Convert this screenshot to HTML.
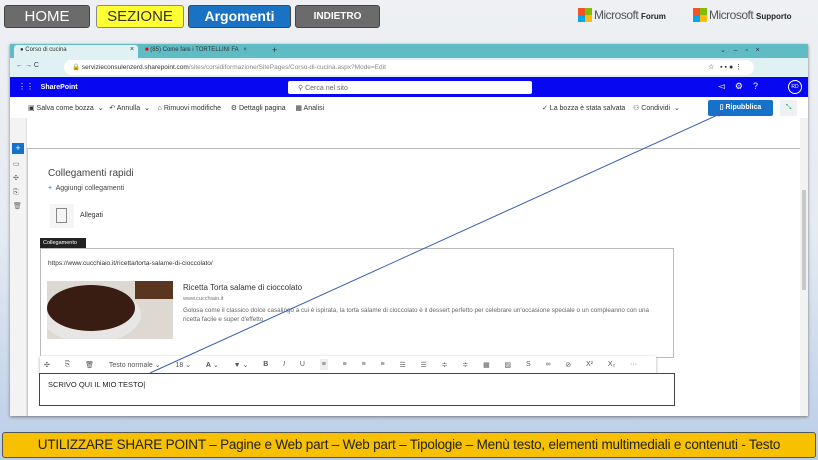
<!DOCTYPE html>
<html><head><meta charset="utf-8"><style>
*{margin:0;padding:0;box-sizing:border-box}
body{width:818px;height:460px;overflow:hidden;position:relative;font-family:"Liberation Sans",sans-serif;background:linear-gradient(#eef0f3 0%,#e6ebf2 50%,#b9cde8 100%)}
.a{position:absolute}
.btn{position:absolute;top:5px;height:23px;border-radius:3px;border:1px solid #444;text-align:center;line-height:21px}
.t{font-size:7px;color:#333;white-space:nowrap}
.tb{display:flex;justify-content:space-between;align-items:center}
</style></head><body>
<div class="btn" style="left:4px;width:86px;background:#6b6b6b;color:#fff;font-size:15px">HOME</div>
<div class="btn" style="left:96px;width:88px;background:#ffff33;color:#333;font-size:15px;border-color:#888">SEZIONE</div>
<div class="btn" style="left:188px;width:103px;background:#1a72c4;color:#fff;font-size:14px;font-weight:bold">Argomenti</div>
<div class="btn" style="left:295px;width:85px;background:#6b6b6b;color:#fff;font-size:10px;font-weight:bold">INDIETRO</div>
<div class="a" style="left:578px;top:8px;width:14px;height:14px;background:linear-gradient(90deg,#f35325 50%,#81bc06 50%) top/100% 50% no-repeat,linear-gradient(90deg,#05a6f0 50%,#ffba08 50%) bottom/100% 50% no-repeat"></div>
<div class="a" style="left:594px;top:8px;font-size:12px;color:#555;letter-spacing:-0.5px">Microsoft <b style="font-size:8px;color:#222;letter-spacing:0">Forum</b></div>
<div class="a" style="left:693px;top:8px;width:14px;height:14px;background:linear-gradient(90deg,#f35325 50%,#81bc06 50%) top/100% 50% no-repeat,linear-gradient(90deg,#05a6f0 50%,#ffba08 50%) bottom/100% 50% no-repeat"></div>
<div class="a" style="left:709px;top:8px;font-size:12px;color:#555;letter-spacing:-0.5px">Microsoft <b style="font-size:8px;color:#222;letter-spacing:0">Supporto</b></div>

<div class="a" style="left:10px;top:44px;width:798px;height:372px;background:#fff;box-shadow:0 1px 3px #777"></div>
<div class="a" style="left:10px;top:44px;width:798px;height:14px;background:#5fbcc4"></div>
<div class="a" style="left:14px;top:45px;width:124px;height:13px;background:#dff1f2;border-radius:3px 3px 0 0"></div>
<div class="a t" style="left:20px;top:47px;font-size:6px">● Corso di cucina</div>
<div class="a t" style="left:130px;top:46px">×</div>
<div class="a t" style="left:145px;top:47px;font-size:6px"><span style="color:#e00">■</span> (85) Come fare i TORTELLINI FA &nbsp; ×</div>
<div class="a t" style="left:272px;top:45px;font-size:9px">+</div>
<div class="a t" style="left:720px;top:46px;font-size:7px;color:#234">⌄ &nbsp;&nbsp; – &nbsp;&nbsp; ▫ &nbsp;&nbsp; ×</div>
<div class="a" style="left:10px;top:58px;width:798px;height:19px;background:#dff1f2"></div>
<div class="a t" style="left:16px;top:62px;color:#345">← → C</div>
<div class="a" style="left:64px;top:60px;width:690px;height:15px;background:#fff;border-radius:8px"></div>
<div class="a t" style="left:72px;top:63px;font-size:6.5px">🔒 servizieconsulenzerd.sharepoint.com<span style="color:#888">/sites/corsidiformazione/SitePages/Corso-di-cucina.aspx?Mode=Edit</span></div>
<div class="a t" style="left:708px;top:63px">☆ &nbsp; ▪ ▪ ● ⋮</div>
<div class="a" style="left:10px;top:77px;width:798px;height:20px;background:#0707f2"></div>
<div class="a t" style="left:18px;top:82px;color:#fff;font-size:8px">⋮⋮ &nbsp;&nbsp;<b style="font-size:7px">SharePoint</b></div>
<div class="a" style="left:288px;top:81px;width:244px;height:13px;background:#fff;border-radius:2px"></div>
<div class="a t" style="left:298px;top:84px;color:#666">⚲ Cerca nel sito</div>
<div class="a t" style="left:718px;top:81px;color:#fff;font-size:9px">◅ &nbsp;&nbsp; ⚙ &nbsp;&nbsp; ? &nbsp;&nbsp;</div>
<div class="a" style="left:788px;top:80px;width:14px;height:14px;border:1px solid #fff;border-radius:50%;color:#fff;font-size:5px;text-align:center;line-height:12px">RD</div>
<div class="a t" style="left:28px;top:104px">▣ Salva come bozza &nbsp;⌄ &nbsp; ↶ Annulla &nbsp;⌄ &nbsp;&nbsp; ⌂ Rimuovi modifiche &nbsp;&nbsp;&nbsp; ⚙ Dettagli pagina &nbsp;&nbsp;&nbsp; ▦ Analisi</div>
<div class="a t" style="left:542px;top:104px">✓ La bozza è stata salvata &nbsp;&nbsp; ⚇ Condividi &nbsp;⌄</div>
<div class="a" style="left:708px;top:100px;width:65px;height:16px;background:#1672c8;border-radius:2px;color:#fff;font-size:7px;font-weight:bold;text-align:center;line-height:16px">▯ Ripubblica</div>
<div class="a" style="left:780px;top:100px;width:17px;height:16px;background:#eef0f3;font-size:7px;text-align:center;line-height:16px;color:#2a5">⤡</div>
<div class="a" style="left:10px;top:118px;width:17px;height:298px;background:#f3f3f3;border-right:1px solid #ddd"></div>
<div class="a" style="left:12px;top:143px;width:12px;height:11px;background:#1672c8;color:#fff;font-size:9px;text-align:center;line-height:11px">+</div>
<div class="a t" style="left:13px;top:158px;line-height:14px;color:#666">▭<br>✣<br>⎘<br>🗑</div>
<div class="a" style="left:27px;top:148px;width:773px;height:268px;border-top:1px solid #bbb;border-left:1px solid #ccc"></div>
<div class="a" style="left:800px;top:118px;width:8px;height:298px;background:#f2f2f2"></div>
<div class="a" style="left:802px;top:190px;width:4px;height:100px;background:#c8c8c8"></div>
<div class="a" style="left:48px;top:168px;font-size:10px;color:#444">Collegamenti rapidi</div>
<div class="a t" style="left:48px;top:185px;color:#444"><span style="color:#1672c8">+</span>&nbsp; Aggiungi collegamenti</div>
<div class="a" style="left:50px;top:204px;width:24px;height:24px;background:#f5f5f5"></div>
<div class="a" style="left:56px;top:208px;width:11px;height:15px;border:1px solid #888"></div>
<div class="a t" style="left:80px;top:212px">Allegati</div>
<div class="a" style="left:40px;top:238px;width:46px;height:10px;background:#222;color:#fff;font-size:5.5px;padding:2px 3px">Collegamento</div>
<div class="a" style="left:40px;top:248px;width:634px;height:110px;border:1px solid #bbb"></div>
<div class="a t" style="left:48px;top:260px;font-size:6.5px">https://www.cucchiaio.it/ricetta/torta-salame-di-cioccolato/</div>
<div class="a" style="left:47px;top:281px;width:126px;height:58px;background:#ddd8d2;overflow:hidden">
 <div class="a" style="left:-6px;top:6px;width:100px;height:56px;border-radius:50%;background:#e8e6e4"></div>
 <div class="a" style="left:0;top:4px;width:88px;height:46px;border-radius:50%;background:#3a1d12"></div>
 <div class="a" style="left:88px;top:0;width:38px;height:18px;background:#5a3520"></div>
</div>
<div class="a" style="left:183px;top:283px;font-size:8px;color:#333">Ricetta Torta salame di cioccolato</div>
<div class="a t" style="left:183px;top:296px;font-size:5.5px;color:#777">www.cucchiaio.it</div>
<div class="a" style="left:183px;top:306px;font-size:6.3px;color:#666;width:480px;line-height:9px">Golosa come il classico dolce casalingo a cui è ispirata, la torta salame di cioccolato è il dessert perfetto per celebrare un'occasione speciale o un compleanno con una ricetta facile e super d'effetto.</div>
<div class="a" style="left:40px;top:356px;width:616px;height:17px;background:#fff;box-shadow:0 1px 3px #aaa"></div>
<div class="a t tb" style="left:44px;top:356px;width:608px;height:17px;color:#555"><span>✣</span><span>⎘</span><span>🗑</span><span>Testo normale ⌄</span><span>18 ⌄</span><span><b>A</b> ⌄</span><span>▼ ⌄</span><b>B</b><i>I</i><span>U</span><span style="background:#eee;padding:2px">≡</span><span>≡</span><span>≡</span><span>≡</span><span>☰</span><span>☰</span><span>≑</span><span>≑</span><span>▦</span><span>▨</span><span>S</span><span>∞</span><span>⊘</span><span>X²</span><span>X₂</span><span>···</span><span></span></div>
<div class="a" style="left:39px;top:373px;width:636px;height:33px;border:1px solid #444;background:#fff"></div>
<div class="a" style="left:48px;top:380px;font-size:7.5px;color:#222">SCRIVO QUI IL MIO TESTO|</div>
<svg class="a" style="left:0;top:0" width="818" height="460"><line x1="150" y1="373" x2="722" y2="113" stroke="#3b5fb0" stroke-width="1"/><polygon points="722,112 716,113 719,117" fill="#3b5fb0"/></svg>
<div class="a" style="left:2px;top:432px;width:814px;height:26px;background:#f7c000;border:1px solid #555;border-radius:3px;text-align:center;line-height:24px;font-size:13.5px;color:#222;letter-spacing:-0.2px">UTILIZZARE SHARE POINT – Pagine e Web part – Web part – Tipologie – Menù testo, elementi multimediali e contenuti - Testo</div>
</body></html>
